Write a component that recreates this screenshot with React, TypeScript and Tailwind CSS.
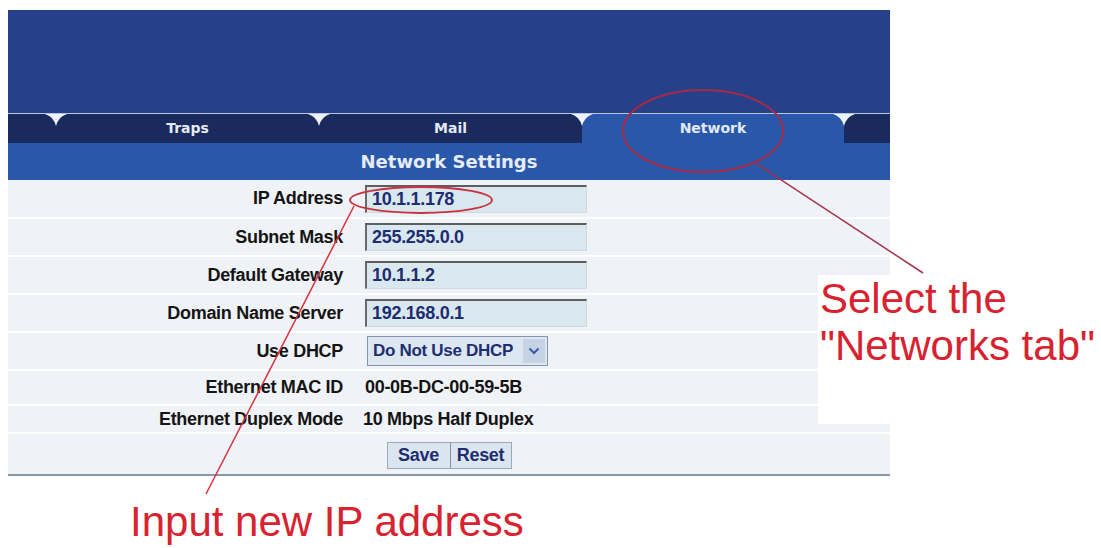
import React from 'react'

const Notch = () => (
  <svg
    width="22"
    height="12"
    viewBox="0 0 22 12"
    className="absolute top-0 -left-[11px] z-10"
  >
    <path d="M0 0 H22 Q13.5 2.5 11 12 Q8.5 2.5 0 0 Z" fill="#eef2f9" />
  </svg>
)

const Tab = ({
  label,
  active,
  width,
  notch = true,
}: {
  label?: string
  active?: boolean
  width: string
  notch?: boolean
}) => (
  <div
    className={`relative flex h-full items-center justify-center ${width} ${
      active ? 'bg-[#2958aa]' : 'bg-[#1b2a5d]'
    }`}
  >
    {notch && <Notch />}
    {label && (
      <span className="font-['DejaVu_Sans',sans-serif] text-[14px] font-bold text-[#e3e9f5]">
        {label}
      </span>
    )}
  </div>
)

const Field = ({ value }: { value: string }) => (
  <div className="flex h-[28px] w-[222px] items-center border-t-2 border-r border-b border-l-2 border-t-[#5e5e5e] border-r-[#d0d8e0] border-b-[#d0d8e0] border-l-[#6a6a6a] bg-[#d9e7ee] pl-[5px] text-[#1e2d70]">
    {value}
  </div>
)

const Row = ({
  label,
  height,
  children,
}: {
  label: string
  height: string
  children: React.ReactNode
}) => (
  <div className={`flex items-center border-b-2 border-white/90 ${height}`}>
    <div className="w-[335px] text-right text-[#141414]">{label}</div>
    <div className="ml-[22px] flex items-center">{children}</div>
  </div>
)

export default function App() {
  return (
    <div className="relative h-[548px] w-[1101px] overflow-hidden bg-white font-['Liberation_Sans',Arial,sans-serif]">
      {/* Device web panel */}
      <div className="ml-[8px] w-[882px] pt-[10px]">
        <div className="h-[103px] bg-[#26408a]" />
        <div className="h-px bg-[#b8c6e2]" />
        <div className="flex h-[29px]">
          <Tab width="w-[48px]" notch={false} />
          <Tab label="Traps" width="w-[263px]" />
          <Tab label="Mail" width="w-[263px]" />
          <Tab label="Network" width="w-[262px]" active />
          <Tab width="flex-1" />
        </div>
        <div className="flex h-[37px] items-center justify-center bg-[#2958aa]">
          <span className="font-['DejaVu_Sans',sans-serif] text-[18px] font-bold text-[#e6ecf7]">
            Network Settings
          </span>
        </div>

        <div className="bg-[#eff2f7] text-[18px] font-bold tracking-[-0.3px]">
          <Row label="IP Address" height="h-[39px]">
            <Field value="10.1.1.178" />
          </Row>
          <Row label="Subnet Mask" height="h-[38px]">
            <Field value="255.255.0.0" />
          </Row>
          <Row label="Default Gateway" height="h-[38px]">
            <Field value="10.1.1.2" />
          </Row>
          <Row label="Domain Name Server" height="h-[38px]">
            <Field value="192.168.0.1" />
          </Row>
          <Row label="Use DHCP" height="h-[38px]">
            <div className="ml-[2px] flex h-[30px] w-[181px] items-center border border-[#8594ad] bg-[#dde7f1] text-[17px] text-[#1e2d70]">
              <span className="flex-1 pl-[5px]">Do Not Use DHCP</span>
              <span className="mr-[2px] flex h-[24px] w-[22px] items-center justify-center bg-[#c6d3e6]">
                <svg width="12" height="8" viewBox="0 0 12 8">
                  <path
                    d="M1.5 1.5 L6 6 L10.5 1.5"
                    fill="none"
                    stroke="#3a5fa8"
                    strokeWidth="2.2"
                  />
                </svg>
              </span>
            </div>
          </Row>
          <Row label="Ethernet MAC ID" height="h-[35px]">
            <span className="text-[#141414]">00-0B-DC-00-59-5B</span>
          </Row>
          <Row label="Ethernet Duplex Mode" height="h-[28px]">
            <span className="-ml-[2px] text-[#141414]">10 Mbps Half Duplex</span>
          </Row>
          <div className="flex h-[40px] items-center justify-center pt-[2px]">
            <div className="flex h-[27px] border border-[#9aa8bc] bg-[#dae5f0] text-[#1e2d70]">
              <span className="flex w-[63px] items-center justify-center border-r border-[#8292ab]">
                Save
              </span>
              <span className="flex w-[60px] items-center justify-center">
                Reset
              </span>
            </div>
          </div>
          <div className="h-[2px] bg-[#8a96aa]" />
        </div>
      </div>

      {/* Callout text below the panel */}
      <div className="mt-[22px] pl-[130px] text-[42px] leading-[47px] text-[#d8222f]">
        Input new IP address
      </div>

      {/* Callout box on the right */}
      <div className="absolute top-[275px] left-[818px] w-[283px] bg-white pb-[55px] pl-[2px] text-[42px] leading-[47px] text-[#d8222f]">
        Select the
        <br />
        "Networks tab"
      </div>

      {/* Marker ellipses and leader lines */}
      <svg
        className="pointer-events-none absolute inset-0"
        width="1101"
        height="548"
        viewBox="0 0 1101 548"
      >
        <ellipse
          cx="703"
          cy="131"
          rx="80"
          ry="41"
          fill="none"
          stroke="#a42a48"
          strokeWidth="2"
        />
        <line x1="757" y1="164" x2="923" y2="273" stroke="#a8304a" strokeWidth="1.5" />
        <ellipse
          cx="421"
          cy="200"
          rx="71"
          ry="13"
          fill="none"
          stroke="#c9323e"
          strokeWidth="1.8"
        />
        <line x1="354" y1="206" x2="206" y2="494" stroke="#d8303a" strokeWidth="1.5" />
      </svg>
    </div>
  )
}
